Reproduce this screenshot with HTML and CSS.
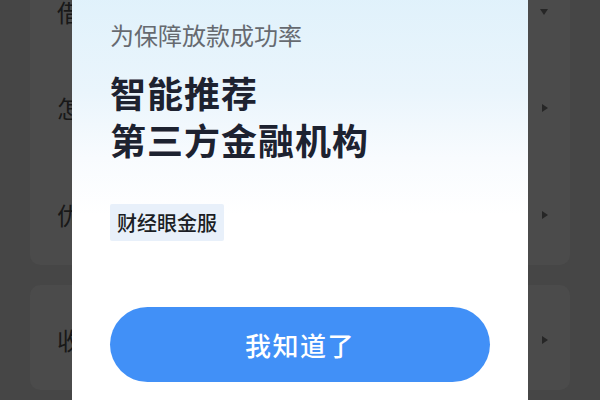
FILE: index.html
```html
<!DOCTYPE html>
<html lang="zh-CN">
<head>
<meta charset="utf-8">
<title>智能推荐</title>
<link rel="stylesheet" href="styles.css">
</head>
<body>
<div class="page">
  <div class="card card-top">
    <div class="row row1"><span class="label">借</span><span class="arrow down"></span></div>
    <div class="row row2"><span class="label">怎</span><span class="arrow"></span></div>
    <div class="row row3"><span class="label">优</span><span class="arrow"></span></div>
  </div>
  <div class="card card-bottom">
    <div class="row row4"><span class="label">收</span><span class="arrow"></span></div>
  </div>
</div>
<div class="modal">
  <div class="sub">为保障放款成功率</div>
  <div class="title">智能推荐<br>第三方金融机构</div>
  <div class="tag">财经眼金服</div>
  <div class="btn">我知道了</div>
</div>
</body>
</html>
```
FILE: styles.css
```css
html, body {
  margin: 0;
  padding: 0;
}
body {
  width: 600px;
  height: 400px;
  overflow: hidden;
  background: #464646;
  font-family: "Noto Sans CJK SC", "Noto Sans", sans-serif;
  position: relative;
}
.page {
  padding: 0 30px;
  margin-top: -37px;
  display: flex;
  flex-direction: column;
  gap: 20px;
}
.card {
  background: #4b4b4b;
  border-radius: 10px;
  display: flex;
  flex-direction: column;
}
.row {
  display: flex;
  align-items: center;
  justify-content: space-between;
  padding: 0 27px;
  box-sizing: border-box;
}
.row1 { height: 98px; }
.row2 { height: 94px; }
.row3 { height: 110px; padding-top: 10px; }
.row4 { height: 105px; padding-top: 5px; }
.label {
  font-size: 24px;
  color: #181818;
  line-height: 30px;
}
.arrow {
  width: 0;
  height: 0;
  border-top: 4px solid transparent;
  border-bottom: 4px solid transparent;
  border-left: 6px solid #262626;
  margin-right: -5px;
}
.arrow.down {
  border-left: 4px solid transparent;
  border-right: 4px solid transparent;
  border-top: 6px solid #262626;
  border-bottom: 0;
}
.modal {
  position: absolute;
  left: 72px;
  top: -40px;
  width: 456px;
  height: 440px;
  box-sizing: border-box;
  padding: 59px 38px 0;
  border-radius: 20px 20px 0 0;
  background: linear-gradient(180deg, #dcf0fb 0%, #eaf5fc 30%, #f8fbfe 45%, #ffffff 58%);
}
.sub {
  font-size: 24px;
  line-height: 32px;
  color: #666a70;
}
.title {
  margin-top: 18px;
  font-size: 36px;
  line-height: 47px;
  font-weight: 700;
  letter-spacing: 1px;
  color: #1d2230;
}
.tag {
  display: inline-block;
  margin-top: 41px;
  height: 37px;
  line-height: 37px;
  padding: 0 7px;
  font-size: 20px;
  font-weight: 500;
  color: #1b1e25;
  background: #e8f0fa;
  border-radius: 2px;
}
.btn {
  margin-top: 66px;
  height: 75px;
  border-radius: 38px;
  background: #4190f7;
  color: #ffffff;
  font-size: 26px;
  font-weight: 500;
  letter-spacing: 1.5px;
  display: flex;
  align-items: center;
  justify-content: center;
}
```
